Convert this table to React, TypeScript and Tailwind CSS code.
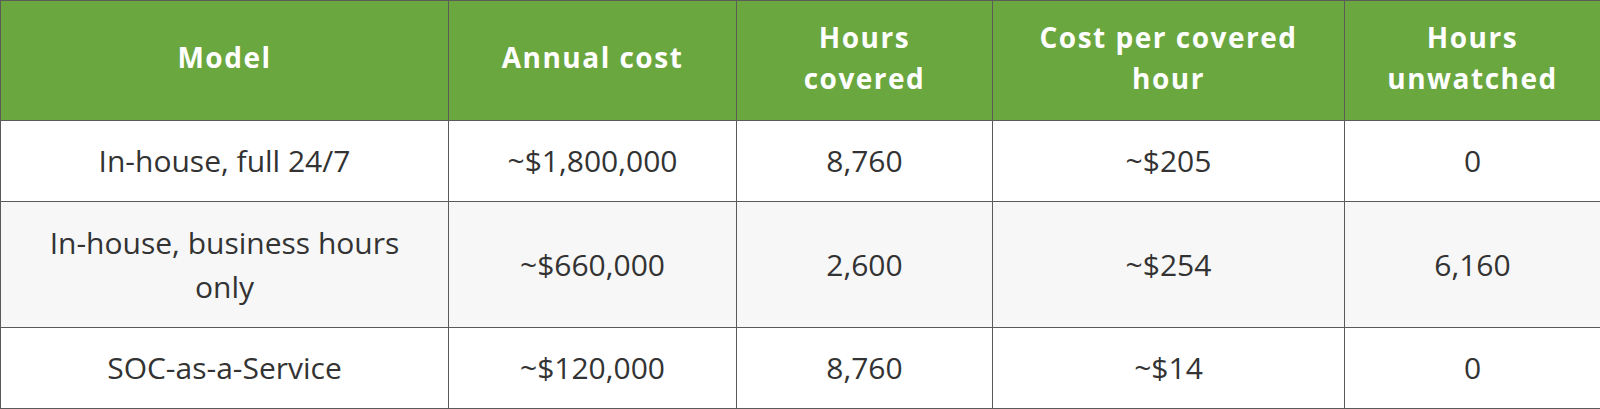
import React from "react";

const rows = [
  ["In-house, full 24/7", "~$1,800,000", "8,760", "~$205", "0"],
  ["In-house, business hours only", "~$660,000", "2,600", "~$254", "6,160"],
  ["SOC-as-a-Service", "~$120,000", "8,760", "~$14", "0"],
];

const headers = ["Model", "Annual cost", "Hours covered", "Cost per covered hour", "Hours unwatched"];

export default function App() {
  return (
    <div className="w-[1600px] h-[409px] bg-white">
      <table className="w-[1600px] table-fixed border-collapse border border-[#555]">
        <colgroup>
          <col className="w-[448px]" />
          <col className="w-[288px]" />
          <col className="w-[256px]" />
          <col className="w-[352px]" />
          <col className="w-[256px]" />
        </colgroup>
        <thead>
          <tr className="bg-[#6ba73f] h-[120px]">
            {headers.map((h) => (
              <th
                key={h}
                className="border border-[#5a5a5a] px-5 pt-[15px] pb-[21px] text-center align-middle text-white font-bold text-[28px] leading-[41px] tracking-[1.5px] [font-family:'Open_Sans',Lato,sans-serif]"
              >
                {h}
              </th>
            ))}
          </tr>
        </thead>
        <tbody>
          {rows.map((r, i) => (
            <tr key={i} className={i === 1 ? "bg-[#f7f7f7] h-[126px]" : "bg-white h-[81px]"}>
              {r.map((c, j) => (
                <td
                  key={j}
                  className="border border-[#5a5a5a] px-5 py-[18px] text-center align-middle text-[#333] text-[30px] leading-[44px] [font-family:'Open_Sans',sans-serif]"
                >
                  {c}
                </td>
              ))}
            </tr>
          ))}
        </tbody>
      </table>
    </div>
  );
}
